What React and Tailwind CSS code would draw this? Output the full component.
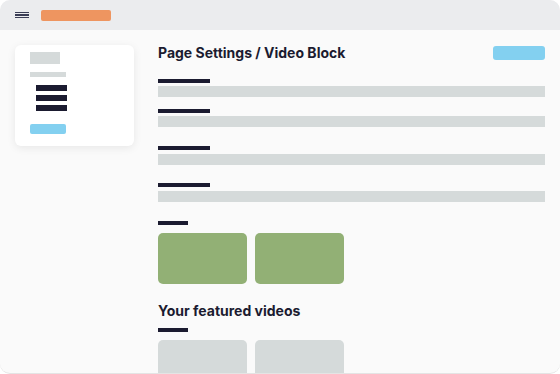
import React from 'react';

const Label = ({ className }) => <div className={`h-[4px] bg-[#1b1b30] ${className}`} />;
const Input = ({ className }) => <div className={`h-[11px] bg-[#d5dada] ${className}`} />;

const App = () => {
  return (
    <div className="w-[560px] h-[374px] bg-white" style={{ fontFamily: 'Inter, "Noto Sans", sans-serif' }}>
      <div className="w-full h-full rounded-[10px] bg-[#fafafa] overflow-hidden flex flex-col border-b border-[#e4e4e4]">
        {/* top bar */}
        <div className="h-[30px] shrink-0 bg-[#ebecee] flex items-center pl-[15px]">
          <div className="flex flex-col gap-[1.3px] w-[14px]">
            <div className="h-[1.3px] bg-[#3a3d55]" />
            <div className="h-[1.3px] bg-[#3a3d55]" />
            <div className="h-[1.3px] bg-[#3a3d55]" />
          </div>
          <div className="ml-[12px] w-[70px] h-[11px] rounded-[2px] bg-[#ee9560]" />
        </div>

        <div className="flex flex-1 min-h-0 pt-[15px] pl-[15px] pr-[15px]">
          {/* sidebar card */}
          <div className="w-[119px] h-[101px] shrink-0 bg-white rounded-[6px] shadow-[0_2px_8px_rgba(0,0,0,0.08)] pt-[7px] pl-[15px]">
            <div className="w-[30px] h-[12px] bg-[#d5dada]" />
            <div className="mt-[8px] w-[36px] h-[5px] bg-[#d5dada]" />
            <div className="mt-[8px] ml-[6px] flex flex-col gap-[4px]">
              <div className="w-[31px] h-[6px] bg-[#1b1b30]" />
              <div className="w-[31px] h-[6px] bg-[#1b1b30]" />
              <div className="w-[31px] h-[6px] bg-[#1b1b30]" />
            </div>
            <div className="mt-[13px] w-[36px] h-[10px] rounded-[2px] bg-[#83d0f0]" />
          </div>

          {/* main */}
          <div className="flex-1 ml-[24px]">
            <div className="h-[15px] flex items-center justify-between">
              <h1 className="text-[14px] leading-none font-bold text-[#1b1b30] pt-[1px]">Page Settings / Video Block</h1>
              <div className="w-[52px] h-[14px] rounded-[3px] bg-[#83d0f0]" />
            </div>

            <Label className="mt-[19px] w-[52px]" />
            <Input className="mt-[3px]" />

            <Label className="mt-[12px] w-[52px]" />
            <Input className="mt-[3px]" />

            <Label className="mt-[19px] w-[52px]" />
            <Input className="mt-[4px]" />

            <Label className="mt-[18px] w-[52px]" />
            <Input className="mt-[4px]" />

            <Label className="mt-[19px] w-[30px]" />
            <div className="mt-[8px] flex gap-[8px]">
              <div className="w-[89px] h-[51px] rounded-[5px] bg-[#92b075]" />
              <div className="w-[89px] h-[51px] rounded-[5px] bg-[#92b075]" />
            </div>

            <h2 className="mt-[20px] text-[14px] leading-none font-bold text-[#1b1b30]">Your featured videos</h2>
            <Label className="mt-[10px] w-[30px]" />
            <div className="mt-[8px] flex gap-[8px]">
              <div className="w-[89px] h-[51px] rounded-[5px] bg-[#d5dada]" />
              <div className="w-[89px] h-[51px] rounded-[5px] bg-[#d5dada]" />
            </div>
          </div>
        </div>
      </div>
    </div>
  );
};

export default App;
